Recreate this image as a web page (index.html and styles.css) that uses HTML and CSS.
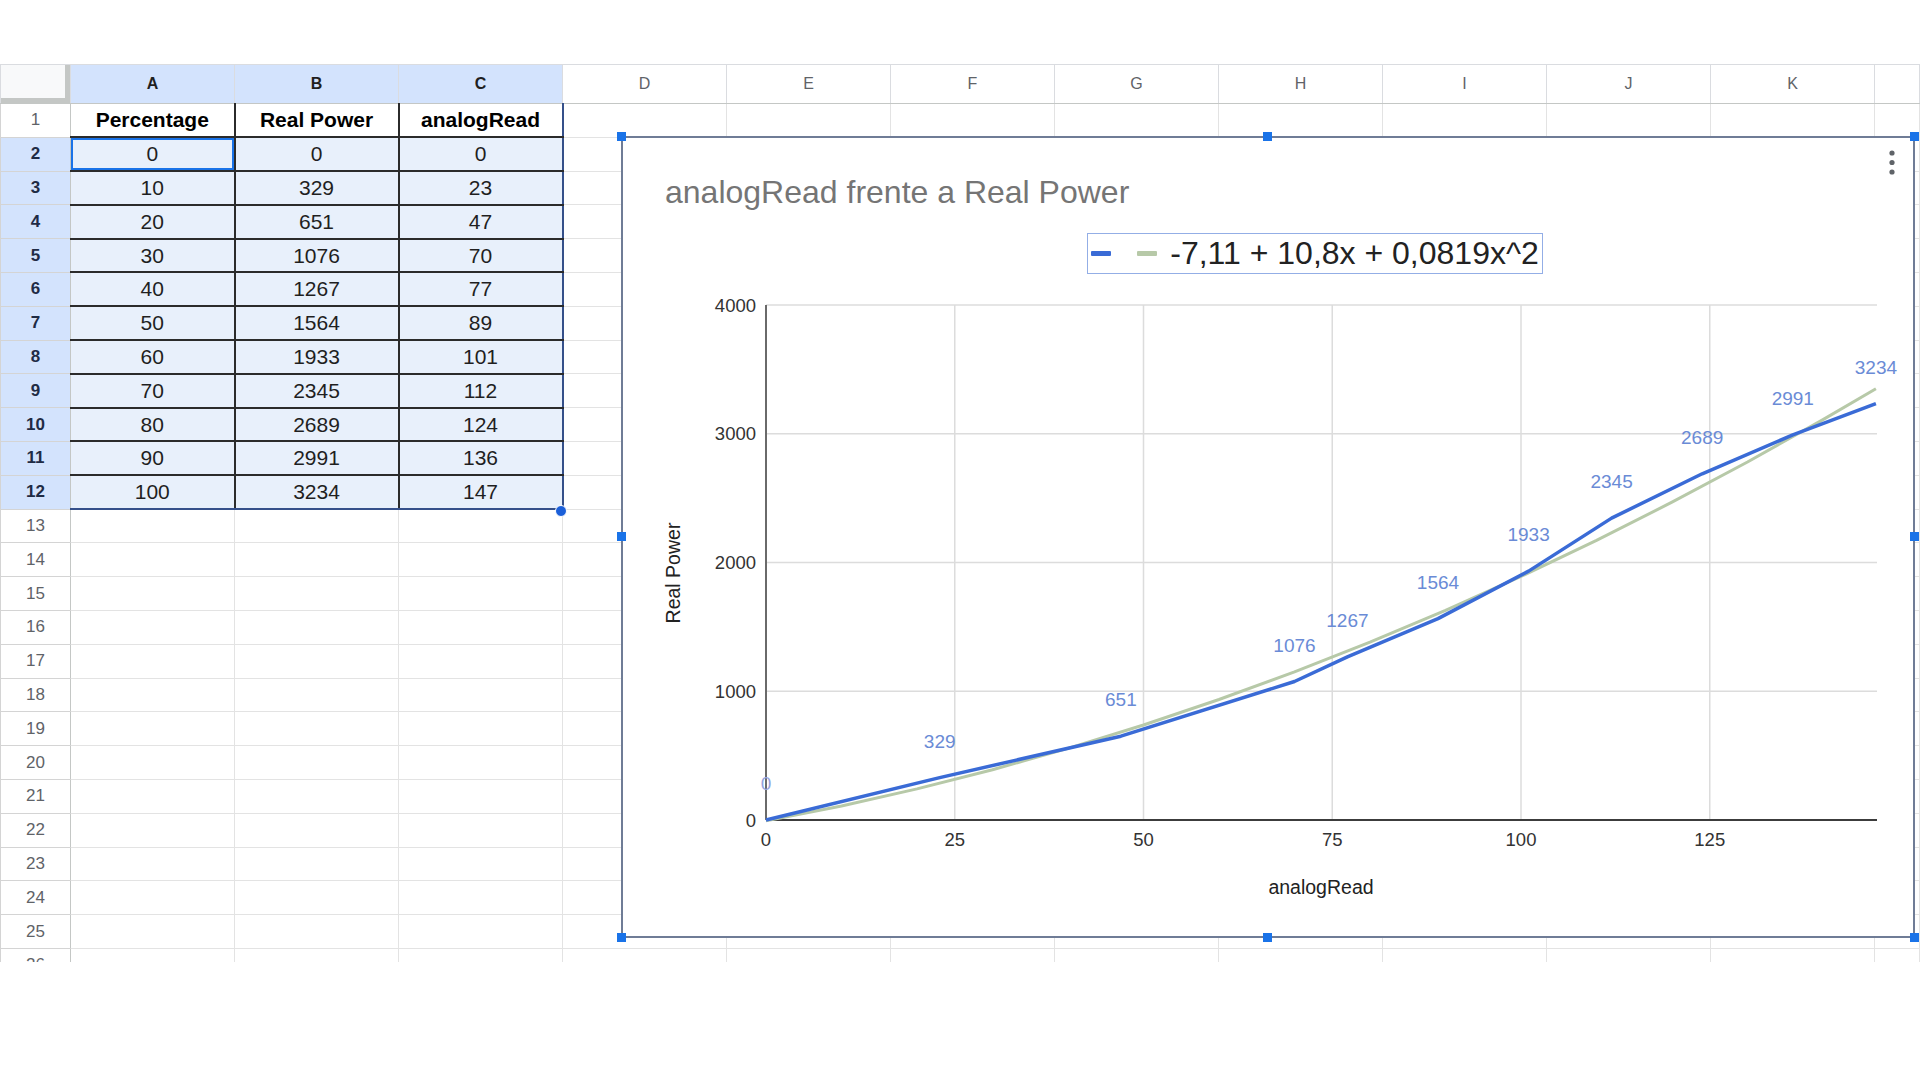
FILE: index.html
```html
<!DOCTYPE html>
<html>
<head>
  <meta charset="utf-8"/>
  <title>analogRead frente a Real Power</title>
  <link rel="stylesheet" href="styles.css">
</head>
<body>
  <div class="sheet">
    <table class="grid">
      <colgroup>
        <col class="rowhead-col">
        <col class="cell-col"><col class="cell-col"><col class="cell-col">
        <col class="cell-col"><col class="cell-col"><col class="cell-col">
        <col class="cell-col"><col class="cell-col"><col class="cell-col">
        <col class="cell-col"><col class="cell-col">
        <col>
      </colgroup>
      <thead>
        <tr>
          <th class="corner"></th>
          <th class="sel">A</th><th class="sel">B</th><th class="sel">C</th>
          <th>D</th><th>E</th><th>F</th><th>G</th><th>H</th><th>I</th><th>J</th><th>K</th><th></th>
        </tr>
      </thead>
      <tbody>
        <tr class="names">
          <th>1</th>
          <td class="v a">Percentage</td><td class="v">Real Power</td><td class="v c">analogRead</td>
          <td></td><td></td><td></td><td></td><td></td><td></td><td></td><td></td><td></td>
        </tr>
        <tr class="sel">
          <th>2</th>
          <td class="v a active">0</td><td class="v">0</td><td class="v c">0</td>
          <td></td><td></td><td></td><td></td><td></td><td></td><td></td><td></td><td></td>
        </tr>
        <tr class="sel">
          <th>3</th>
          <td class="v a">10</td><td class="v">329</td><td class="v c">23</td>
          <td></td><td></td><td></td><td></td><td></td><td></td><td></td><td></td><td></td>
        </tr>
        <tr class="sel">
          <th>4</th>
          <td class="v a">20</td><td class="v">651</td><td class="v c">47</td>
          <td></td><td></td><td></td><td></td><td></td><td></td><td></td><td></td><td></td>
        </tr>
        <tr class="sel">
          <th>5</th>
          <td class="v a">30</td><td class="v">1076</td><td class="v c">70</td>
          <td></td><td></td><td></td><td></td><td></td><td></td><td></td><td></td><td></td>
        </tr>
        <tr class="sel">
          <th>6</th>
          <td class="v a">40</td><td class="v">1267</td><td class="v c">77</td>
          <td></td><td></td><td></td><td></td><td></td><td></td><td></td><td></td><td></td>
        </tr>
        <tr class="sel">
          <th>7</th>
          <td class="v a">50</td><td class="v">1564</td><td class="v c">89</td>
          <td></td><td></td><td></td><td></td><td></td><td></td><td></td><td></td><td></td>
        </tr>
        <tr class="sel">
          <th>8</th>
          <td class="v a">60</td><td class="v">1933</td><td class="v c">101</td>
          <td></td><td></td><td></td><td></td><td></td><td></td><td></td><td></td><td></td>
        </tr>
        <tr class="sel">
          <th>9</th>
          <td class="v a">70</td><td class="v">2345</td><td class="v c">112</td>
          <td></td><td></td><td></td><td></td><td></td><td></td><td></td><td></td><td></td>
        </tr>
        <tr class="sel">
          <th>10</th>
          <td class="v a">80</td><td class="v">2689</td><td class="v c">124</td>
          <td></td><td></td><td></td><td></td><td></td><td></td><td></td><td></td><td></td>
        </tr>
        <tr class="sel">
          <th>11</th>
          <td class="v a">90</td><td class="v">2991</td><td class="v c">136</td>
          <td></td><td></td><td></td><td></td><td></td><td></td><td></td><td></td><td></td>
        </tr>
        <tr class="sel end">
          <th>12</th>
          <td class="v a">100</td><td class="v">3234</td><td class="v c">147</td>
          <td></td><td></td><td></td><td></td><td></td><td></td><td></td><td></td><td></td>
        </tr>
        <tr><th>13</th><td></td><td></td><td></td><td></td><td></td><td></td><td></td><td></td><td></td><td></td><td></td><td></td></tr>
        <tr><th>14</th><td></td><td></td><td></td><td></td><td></td><td></td><td></td><td></td><td></td><td></td><td></td><td></td></tr>
        <tr><th>15</th><td></td><td></td><td></td><td></td><td></td><td></td><td></td><td></td><td></td><td></td><td></td><td></td></tr>
        <tr><th>16</th><td></td><td></td><td></td><td></td><td></td><td></td><td></td><td></td><td></td><td></td><td></td><td></td></tr>
        <tr><th>17</th><td></td><td></td><td></td><td></td><td></td><td></td><td></td><td></td><td></td><td></td><td></td><td></td></tr>
        <tr><th>18</th><td></td><td></td><td></td><td></td><td></td><td></td><td></td><td></td><td></td><td></td><td></td><td></td></tr>
        <tr><th>19</th><td></td><td></td><td></td><td></td><td></td><td></td><td></td><td></td><td></td><td></td><td></td><td></td></tr>
        <tr><th>20</th><td></td><td></td><td></td><td></td><td></td><td></td><td></td><td></td><td></td><td></td><td></td><td></td></tr>
        <tr><th>21</th><td></td><td></td><td></td><td></td><td></td><td></td><td></td><td></td><td></td><td></td><td></td><td></td></tr>
        <tr><th>22</th><td></td><td></td><td></td><td></td><td></td><td></td><td></td><td></td><td></td><td></td><td></td><td></td></tr>
        <tr><th>23</th><td></td><td></td><td></td><td></td><td></td><td></td><td></td><td></td><td></td><td></td><td></td><td></td></tr>
        <tr><th>24</th><td></td><td></td><td></td><td></td><td></td><td></td><td></td><td></td><td></td><td></td><td></td><td></td></tr>
        <tr><th>25</th><td></td><td></td><td></td><td></td><td></td><td></td><td></td><td></td><td></td><td></td><td></td><td></td></tr>
        <tr><th>26</th><td></td><td></td><td></td><td></td><td></td><td></td><td></td><td></td><td></td><td></td><td></td><td></td></tr>
      </tbody>
    </table>

    <!-- drag handle at the corner of the selected range -->
    <span class="fill-handle"></span>

    <!-- embedded chart, selected -->
    <div class="chart">
      <span class="handle h-tl"></span>
      <span class="handle h-tc"></span>
      <span class="handle h-tr"></span>
      <span class="handle h-ml"></span>
      <span class="handle h-mr"></span>
      <span class="handle h-bl"></span>
      <span class="handle h-bc"></span>
      <span class="handle h-br"></span>

      <svg class="chart-menu" width="6" height="30" viewBox="0 0 6 30">
        <circle cx="3" cy="5" r="2.6"/>
        <circle cx="3" cy="14.5" r="2.6"/>
        <circle cx="3" cy="24" r="2.6"/>
      </svg>

      <div class="chart-title">analogRead frente a Real Power</div>

      <div class="legend-row">
        <div class="legend">
          <span class="swatch swatch-series"></span>
          <span class="swatch swatch-trend"></span>
          <span class="legend-label">-7,11 + 10,8x + 0,0819x^2</span>
        </div>
      </div>

      <svg class="plot" width="1290" height="658" viewBox="0 0 1290 658">
        <g class="gridlines">
          <line x1="143" y1="28" x2="1254" y2="28"/>
          <line x1="143" y1="156.75" x2="1254" y2="156.75"/>
          <line x1="143" y1="285.5" x2="1254" y2="285.5"/>
          <line x1="143" y1="414.25" x2="1254" y2="414.25"/>
          <line x1="331.75" y1="28" x2="331.75" y2="543"/>
          <line x1="520.5" y1="28" x2="520.5" y2="543"/>
          <line x1="709.25" y1="28" x2="709.25" y2="543"/>
          <line x1="898" y1="28" x2="898" y2="543"/>
          <line x1="1086.75" y1="28" x2="1086.75" y2="543"/>
        </g>

        <line class="axis-y" x1="143" y1="28" x2="143" y2="543"/>
        <line class="axis-x" x1="143" y1="543" x2="1254" y2="543"/>

        <g class="tick tick-y">
          <text x="133" y="34.5">4000</text>
          <text x="133" y="163">3000</text>
          <text x="133" y="292">2000</text>
          <text x="133" y="421">1000</text>
          <text x="133" y="549.5">0</text>
        </g>
        <g class="tick tick-x">
          <text x="143" y="568.5">0</text>
          <text x="331.75" y="568.5">25</text>
          <text x="520.5" y="568.5">50</text>
          <text x="709.25" y="568.5">75</text>
          <text x="898" y="568.5">100</text>
          <text x="1086.75" y="568.5">125</text>
        </g>

        <!-- y = -7,11 + 10,8x + 0,0819x^2 -->
        <polyline class="trend" points="143,543.9 218.5,529 294,511.9 369.5,492.7 445,471.4 520.5,448 596,422.5 671.5,394.9 747,365.2 822.5,333.4 898,299.4 973.5,263.4 1049,225.2 1124.5,185 1200,142.6 1252.9,111.7"/>

        <polyline class="series" points="143,543 316.7,500.6 497.9,459.2 671.5,404.5 724.4,379.9 815,341.6 905.6,294.1 988.6,241.1 1079.2,196.8 1169.8,157.9 1252.9,126.6"/>

        <g class="point-label">
          <text class="faint" x="143" y="513">0</text>
          <text x="316.7" y="470.6">329</text>
          <text x="497.9" y="429.2">651</text>
          <text x="671.5" y="374.5">1076</text>
          <text x="724.4" y="349.9">1267</text>
          <text x="815" y="311.6">1564</text>
          <text x="905.6" y="264.1">1933</text>
          <text x="988.6" y="211.1">2345</text>
          <text x="1079.2" y="166.8">2689</text>
          <text x="1169.8" y="127.9">2991</text>
          <text x="1252.9" y="96.6">3234</text>
        </g>

        <text class="axis-title" x="698" y="617">analogRead</text>
        <text class="axis-title" x="57" y="296" transform="rotate(-90 57 296)">Real Power</text>
      </svg>
    </div>
  </div>
</body>
</html>
```

FILE: styles.css
```css
body {
  margin: 0;
  background: #fff;
  font-family: "Liberation Sans", Arial, sans-serif;
}
.sheet {
  position: relative;
  margin-top: 64px;
  height: 898px;
  overflow: hidden;
}

/* spreadsheet grid */
.grid {
  border-collapse: collapse;
  table-layout: fixed;
  width: 1920px;
}
.rowhead-col {
  width: 70px;
}
.cell-col {
  width: 164px;
}
.grid th, .grid td {
  padding: 0;
  text-align: center;
  white-space: nowrap;
  overflow: hidden;
}
.grid thead tr {
  height: 39px;
}
.grid tbody tr {
  height: 33.8px;
}
.grid thead th {
  font-size: 16px;
  font-weight: normal;
  color: #5f6368;
  background: #fff;
  border: 1px solid #dadce0;
  border-bottom-color: #c4c7c5;
}
.grid thead th.sel {
  background: #d3e3fd;
  color: #1f1f1f;
  font-weight: bold;
}
.grid thead th.corner {
  background: #f8f9fa;
  box-shadow: inset -5px -5px 0 #c4c7c5;
}
.grid tbody th {
  font-size: 17px;
  font-weight: normal;
  color: #5f6368;
  background: #fff;
  border: 1px solid #d4d4d4;
  border-right-color: #c4c7c5;
}
.grid tbody tr.sel th {
  background: #d3e3fd;
  color: #1f2b45;
  font-weight: bold;
}
.grid td {
  border: 1px solid #e3e3e3;
  font-size: 21px;
  color: #1f1f1f;
}
.grid td.v {
  border: 2px solid #2b2b2b;
  background: #e8f0fb;
}
.grid td.v.a {
  border-left: 1px solid #c4c7c5;
}
.grid td.v.c {
  border-right-color: #35508a;
}
.grid tr.names td.v {
  background: #fff;
  font-weight: bold;
  color: #000;
  border-top: 1px solid #c4c7c5;
}
.grid tr.end td.v {
  border-bottom-color: #35508a;
}
.grid td.active {
  box-shadow: inset 0 0 0 2px #1a73e8;
}
.fill-handle {
  position: absolute;
  left: 555px;
  top: 441px;
  width: 10px;
  height: 10px;
  border-radius: 50%;
  background: #1b5fd9;
  border: 1px solid #fff;
}

/* chart */
.chart {
  position: absolute;
  left: 621px;
  top: 72px;
  width: 1294px;
  height: 802px;
  box-sizing: border-box;
  border: 2px solid #6f7c96;
  background: #fff;
}
.handle {
  position: absolute;
  width: 9px;
  height: 9px;
  background: #1a73e8;
}
.h-tl { left: -6px; top: -6px; }
.h-tc { left: 640px; top: -6px; }
.h-tr { right: -6px; top: -6px; }
.h-ml { left: -6px; top: 394px; }
.h-mr { right: -6px; top: 394px; }
.h-bl { left: -6px; bottom: -6px; }
.h-bc { left: 640px; bottom: -6px; }
.h-br { right: -6px; bottom: -6px; }
.chart-menu {
  position: absolute;
  left: 1266px;
  top: 10px;
  fill: #5f6368;
}
.chart-title {
  padding: 36px 0 0 42px;
  font-size: 32px;
  line-height: 36px;
  color: #757575;
}
.legend-row {
  display: flex;
  justify-content: center;
  margin-top: 23px;
  padding: 0 38px 0 132px;
}
.legend {
  display: flex;
  align-items: center;
  height: 41px;
  box-sizing: border-box;
  border: 1.5px solid #93aee6;
  padding: 0 3px 0 3px;
}
.swatch {
  display: inline-block;
  height: 5px;
  border-radius: 1px;
}
.swatch-series {
  width: 20px;
  background: #3a6bd6;
}
.swatch-trend {
  width: 20px;
  margin-left: 26px;
  background: #b7c9a8;
}
.legend-label {
  margin-left: 13px;
  font-size: 32px;
  color: #222;
}
.plot {
  display: block;
  margin-top: 3px;
}
.gridlines line {
  stroke: #dcdcdc;
  stroke-width: 1.5;
}
.axis-y {
  stroke: #6a6a6a;
  stroke-width: 2;
}
.axis-x {
  stroke: #3c3c3c;
  stroke-width: 2;
}
.tick text {
  font-family: "Liberation Sans", Arial, sans-serif;
  font-size: 18.5px;
  fill: #333;
}
.tick-y text {
  text-anchor: end;
}
.tick-x text {
  text-anchor: middle;
}
.trend {
  fill: none;
  stroke: #b7c9a8;
  stroke-width: 3;
  stroke-linejoin: round;
}
.series {
  fill: none;
  stroke: #3a6bd6;
  stroke-width: 3.5;
  stroke-linejoin: round;
}
.point-label text {
  font-family: "Liberation Sans", Arial, sans-serif;
  font-size: 19px;
  fill: #6a8bd6;
  text-anchor: middle;
}
.point-label .faint {
  fill: #93a3e0;
}
.axis-title {
  font-family: "Liberation Sans", Arial, sans-serif;
  font-size: 19.5px;
  fill: #222;
  text-anchor: middle;
}
```
